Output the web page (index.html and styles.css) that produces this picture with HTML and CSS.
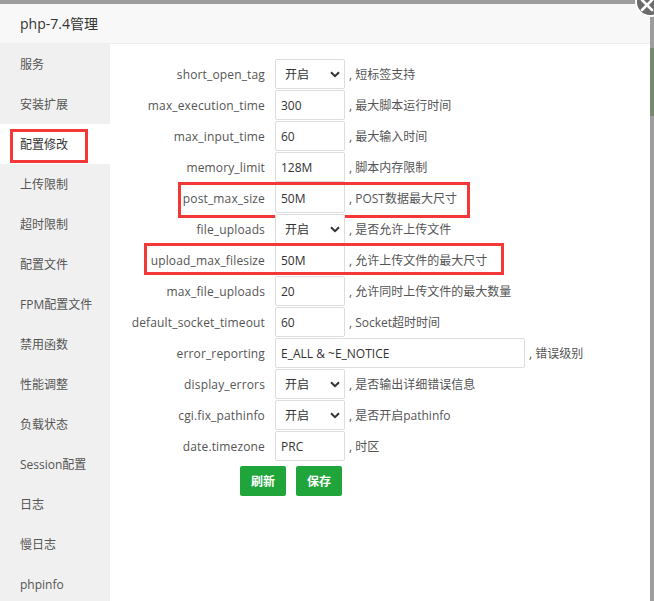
FILE: index.html
```html
<!DOCTYPE html>
<html lang="zh-CN">
<head>
<meta charset="utf-8">
<title>php-7.4管理</title>
<link rel="stylesheet" href="styles.css">
</head>
<body>
<div class="modal">
  <div class="title">php-7.4管理</div>
  <span class="close">
    <svg width="14" height="14" viewBox="0 0 14 14"><path d="M2 2 L12 12 M12 2 L2 12" stroke="#fff" stroke-width="2.6" stroke-linecap="round"/></svg>
  </span>
  <div class="main">
    <ul class="side">
      <li>服务</li>
      <li>安装扩展</li>
      <li class="active">配置修改<span class="mark mark-side"></span></li>
      <li>上传限制</li>
      <li>超时限制</li>
      <li>配置文件</li>
      <li>FPM配置文件</li>
      <li>禁用函数</li>
      <li>性能调整</li>
      <li>负载状态</li>
      <li>Session配置</li>
      <li>日志</li>
      <li>慢日志</li>
      <li>phpinfo</li>
    </ul>
    <div class="form">
      <div class="row"><span class="label">short_open_tag</span><div class="field select"><span>开启</span><svg width="10" height="7" viewBox="0 0 10 7"><path d="M1 1.2 L5 5.2 L9 1.2" fill="none" stroke="#333" stroke-width="2"/></svg></div><span class="note">, 短标签支持</span></div>
      <div class="row"><span class="label">max_execution_time</span><div class="field">300</div><span class="note">, 最大脚本运行时间</span></div>
      <div class="row"><span class="label">max_input_time</span><div class="field">60</div><span class="note">, 最大输入时间</span></div>
      <div class="row"><span class="label">memory_limit</span><div class="field">128M</div><span class="note">, 脚本内存限制</span></div>
      <div class="row"><span class="label">post_max_size</span><div class="field">50M</div><span class="note">, POST数据最大尺寸</span><span class="mark mark-post"></span></div>
      <div class="row"><span class="label">file_uploads</span><div class="field select"><span>开启</span><svg width="10" height="7" viewBox="0 0 10 7"><path d="M1 1.2 L5 5.2 L9 1.2" fill="none" stroke="#333" stroke-width="2"/></svg></div><span class="note">, 是否允许上传文件</span></div>
      <div class="row"><span class="label">upload_max_filesize</span><div class="field">50M</div><span class="note">, 允许上传文件的最大尺寸</span><span class="mark mark-upload"></span></div>
      <div class="row"><span class="label">max_file_uploads</span><div class="field">20</div><span class="note">, 允许同时上传文件的最大数量</span></div>
      <div class="row"><span class="label">default_socket_timeout</span><div class="field">60</div><span class="note">, Socket超时时间</span></div>
      <div class="row"><span class="label">error_reporting</span><div class="field wide">E_ALL &amp; ~E_NOTICE</div><span class="note">, 错误级别</span></div>
      <div class="row"><span class="label">display_errors</span><div class="field select"><span>开启</span><svg width="10" height="7" viewBox="0 0 10 7"><path d="M1 1.2 L5 5.2 L9 1.2" fill="none" stroke="#333" stroke-width="2"/></svg></div><span class="note">, 是否输出详细错误信息</span></div>
      <div class="row"><span class="label">cgi.fix_pathinfo</span><div class="field select"><span>开启</span><svg width="10" height="7" viewBox="0 0 10 7"><path d="M1 1.2 L5 5.2 L9 1.2" fill="none" stroke="#333" stroke-width="2"/></svg></div><span class="note">, 是否开启pathinfo</span></div>
      <div class="row"><span class="label">date.timezone</span><div class="field">PRC</div><span class="note">, 时区</span></div>
      <div class="buttons"><button class="btn">刷新</button><button class="btn">保存</button></div>
    </div>
  </div>
</div>
</body>
</html>
```
FILE: styles.css
```css
html, body {
  margin: 0;
  padding: 0;
}
body {
  width: 654px;
  height: 601px;
  overflow: hidden;
  background: linear-gradient(to bottom, #9d9d9d 0, #9d9d9d 48px, #76896f 48px, #76896f 116px, #9d9d9d 116px);
  font-family: "Open Sans", "Noto Sans CJK SC", sans-serif;
  font-size: 12px;
  color: #555;
}
.modal {
  position: relative;
  margin-top: 4px;
  width: 650px;
  height: 597px;
  background: #fff;
  display: flex;
  flex-direction: column;
}
.title {
  height: 39px;
  line-height: 39px;
  padding: 0 20px;
  background: #f8f8f8;
  border-bottom: 1px solid #eee;
  font-size: 14px;
  color: #333;
}
.close {
  position: absolute;
  right: -15px;
  top: -17px;
  width: 30px;
  height: 30px;
  box-sizing: border-box;
  border-radius: 50%;
  background: #6b6b6b;
  border: 2px solid #fff;
  display: flex;
  align-items: center;
  justify-content: center;
}
.close svg {
  margin: 6px 6px 0 0;
}
.main {
  flex: 1;
  display: flex;
}
.side {
  list-style: none;
  margin: 0;
  padding: 0;
  width: 110px;
  background: #f0f0f0;
}
.side li {
  position: relative;
  height: 40px;
  line-height: 41px;
  padding-left: 20px;
  color: #555;
}
.side li.active {
  background: #fff;
  color: #333;
}
.mark {
  position: absolute;
  border: 3px solid #f43838;
  box-sizing: border-box;
  pointer-events: none;
}
.mark-side {
  left: 10px;
  top: 5px;
  width: 78px;
  height: 34px;
}
.mark-post {
  left: 68px;
  top: -1px;
  width: 292px;
  height: 36px;
}
.mark-upload {
  left: 34px;
  top: -2px;
  width: 360px;
  height: 32px;
}
.form {
  flex: 1;
  padding-top: 15px;
}
.row {
  position: relative;
  display: flex;
  align-items: center;
  height: 30px;
  margin-bottom: 1px;
}
.label {
  width: 155px;
  padding-right: 10px;
  text-align: right;
  color: #555;
  letter-spacing: 0.15px;
}
.field {
  box-sizing: border-box;
  width: 70px;
  height: 30px;
  border: 1px solid #ddd;
  border-radius: 2px;
  padding-left: 5px;
  display: flex;
  align-items: center;
  color: #333;
  background: #fff;
}
.field.wide {
  width: 250px;
}
.field.select {
  padding: 0 4px 0 9px;
  justify-content: space-between;
}
.note {
  margin-left: 4px;
  color: #555;
}
.buttons {
  display: flex;
  gap: 10px;
  padding-left: 130px;
  margin-top: 5px;
}
.btn {
  height: 30px;
  padding: 0 11px;
  border: none;
  border-radius: 2px;
  background: #20a53a;
  color: #fff;
  font-family: "Open Sans", "Noto Sans CJK SC", sans-serif;
  font-size: 12px;
  font-weight: bold;
}
```
